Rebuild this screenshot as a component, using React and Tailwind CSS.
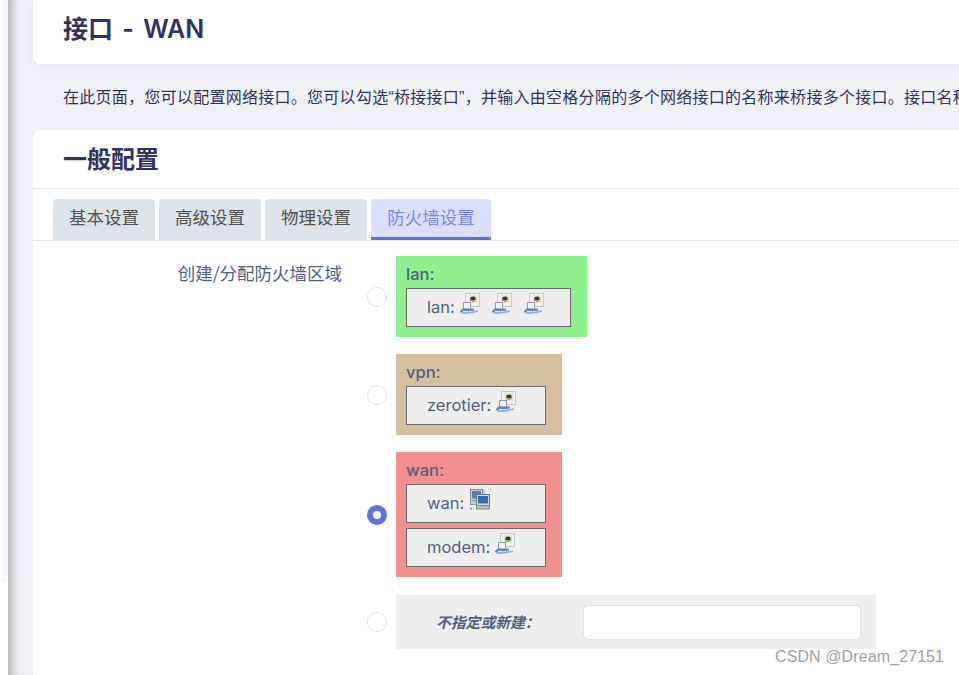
import React from "react";

const cjk = { fontFamily: '"Noto Sans CJK SC", sans-serif' };

const PortIcon = () => (
  <svg width="20" height="21" viewBox="0 0 20 21" className="shrink-0">
    <rect x="5.5" y="0.5" width="14" height="13" fill="#efefec" stroke="#c9c9c5" />
    <rect x="9" y="2.5" width="8" height="7" fill="#dcdccf" />
    <ellipse cx="13" cy="6" rx="2.6" ry="2.4" fill="#3d3b2c" />
    <path d="M10.5 7.5h5" stroke="#a8a268" strokeWidth="1" />
    <rect x="3.5" y="9.5" width="7" height="6.5" fill="#f2f3f4" stroke="#929aa8" />
    <path d="M0.8 19.4c1.4-2.8 3.2-3.4 5-2.6 2.2.6 5.5 0 8-.3" fill="none" stroke="#5f8ac4" strokeWidth="2.4" />
    <path d="M2 20.2c4.5 0 10-.4 16-2.2" fill="none" stroke="#94b2d8" strokeWidth="1.8" />
  </svg>
);

const WanIcon = () => (
  <svg width="21" height="21" viewBox="0 0 21 21" className="shrink-0">
    <rect x="1.5" y="0.5" width="12" height="11" fill="#cfd3d8" stroke="#858a90" />
    <rect x="3" y="2" width="9" height="7.5" fill="#4a7fb8" />
    <rect x="1.5" y="11.5" width="6" height="4" fill="#c6c8cb" stroke="#9a9da0" />
    <rect x="14" y="1" width="2" height="4" fill="#a9cbe8" />
    <rect x="7.5" y="5.5" width="13" height="11" fill="#d8dade" stroke="#73777c" />
    <rect x="9" y="7" width="10" height="7.5" fill="#2f6cb0" />
    <rect x="7.5" y="16.5" width="13" height="3.5" fill="#bcbec1" stroke="#85888c" />
    <rect x="1" y="18" width="2" height="3" fill="#8fc0e8" />
    <rect x="4" y="18" width="1" height="3" fill="#b7d5ee" />
  </svg>
);

const Iface = ({ name, children }) => (
  <div className="h-[39px] border border-[#6b6b6b] bg-[#eeeeee] pl-5 flex items-center text-[16.5px] text-[#525f7f]">
    <span className="mr-[5px]">{name}:</span>
    <span className="-mt-[8px] flex gap-3">{children}</span>
  </div>
);

const Zone = ({ bg, name, width, children }) => (
  <div className={`${bg} pl-[10px] pr-4 pb-[10px]`} style={{ width }}>
    <div className="h-8 pt-[7px] text-[16.5px] leading-[22px] font-medium text-[#525f7f]">{name}:</div>
    <div className="flex flex-col gap-[5px]">{children}</div>
  </div>
);

const Radio = ({ checked }) =>
  checked ? (
    <span className="w-5 h-5 rounded-full border-[6px] border-[#5e72e4] bg-white shrink-0" />
  ) : (
    <span className="w-5 h-5 rounded-full border border-[#dee2e6] bg-white shrink-0" />
  );

const ZoneRow = ({ checked, children }) => (
  <div className="flex items-center gap-[9px]">
    <Radio checked={checked} />
    {children}
  </div>
);

export default function App() {
  const tabs = ["基本设置", "高级设置", "物理设置"];
  const narrowQuote = { fontFamily: '"Liberation Sans", sans-serif' };
  return (
    <div className="relative flex h-[675px] w-[959px] overflow-hidden bg-white" style={{ fontFamily: 'Inter, "Noto Sans CJK SC", sans-serif' }}>
      <div className="w-2 shrink-0 flex flex-col">
        <div className="h-[582px] ml-[2px] bg-[#f5f7fa]" />
      </div>

      <div className="flex-1 min-w-0 pl-[25px] bg-[#f0f1f4] shadow-[inset_12px_0_10px_-8px_rgba(0,0,0,0.28)]">
        <div className="h-16 bg-white rounded-bl-lg flex items-center pl-[30px] pb-1 shadow-[0_4px_12px_rgba(50,50,93,0.04)]">
          <h1 className="text-[25px] font-semibold text-[#32325d] [word-spacing:3px]">接口 - WAN</h1>
        </div>

        <div className="h-[66px] pl-[30px] flex items-center whitespace-nowrap overflow-hidden text-[16px] tracking-[0.27px] text-[#32325d]" style={cjk}>
          <span>
            在此页面，您可以配置网络接口。您可以勾选<span style={narrowQuote}>“</span>桥接接口<span style={narrowQuote}>”</span>，并输入由空格分隔的多个网络接口的名称来桥接多个接口。接口名称中可以使用VLAN记号
          </span>
        </div>

        <div className="h-[545px] bg-white rounded-tl-lg">
          <div className="h-[59px] pl-[30px] pb-[2px] flex items-center border-b border-[#dee2e6]">
            <h2 className="text-[24px] font-bold text-[#32325d]" style={cjk}>一般配置</h2>
          </div>

          <div className="h-[52px] pt-[10px] pl-5 flex gap-1 border-b border-[#dee2e6]" style={cjk}>
            {tabs.map((t) => (
              <div key={t} className="w-[102px] h-[41px] bg-[#dce3e9] rounded-t flex items-center justify-center text-[17.5px] text-[#525252] pb-[4px]">
                {t}
              </div>
            ))}
            <div className="w-[120px] h-[41px] bg-[#dadfff] rounded-t border-b-[3px] border-[#5e72e4] flex items-center justify-center text-[17.5px] text-[#7a86ea] pb-[1px]">
              防火墙设置
            </div>
          </div>

          <div className="flex pt-[15px]">
            <div className="w-[309px] text-right text-[17.5px] leading-[34px] text-[#525f7f] shrink-0" style={cjk}>
              创建/分配防火墙区域
            </div>
            <div className="ml-[25px] flex flex-col gap-[17px]">
              <ZoneRow>
                <Zone bg="bg-[#90f090]" name="lan" width={191}>
                  <Iface name="lan"><PortIcon /><PortIcon /><PortIcon /></Iface>
                </Zone>
              </ZoneRow>
              <ZoneRow>
                <Zone bg="bg-[#d4bf9e]" name="vpn" width={166}>
                  <Iface name="zerotier"><PortIcon /></Iface>
                </Zone>
              </ZoneRow>
              <ZoneRow checked>
                <Zone bg="bg-[#f28f8f]" name="wan" width={166}>
                  <Iface name="wan"><WanIcon /></Iface>
                  <Iface name="modem"><PortIcon /></Iface>
                </Zone>
              </ZoneRow>
              <div className="mt-[1px]">
                <ZoneRow>
                  <div className="w-[480px] h-[54px] bg-[#eeeeee] flex items-center">
                    <span className="ml-10 w-[147px] text-[14.8px] font-bold italic text-[#525f7f]" style={cjk}>不指定或新建：</span>
                    <input className="w-[278px] h-[35px] bg-white border border-[#dee2e6] rounded-[5px]" />
                  </div>
                </ZoneRow>
              </div>
            </div>
          </div>
        </div>
      </div>

      <div className="absolute left-[775px] top-[648px] text-[16px] leading-[18px] tracking-[0.1px] text-[#a0a0a0]" style={{ fontFamily: '"Liberation Sans", sans-serif' }}>
        CSDN @Dream_27151
      </div>
    </div>
  );
}
